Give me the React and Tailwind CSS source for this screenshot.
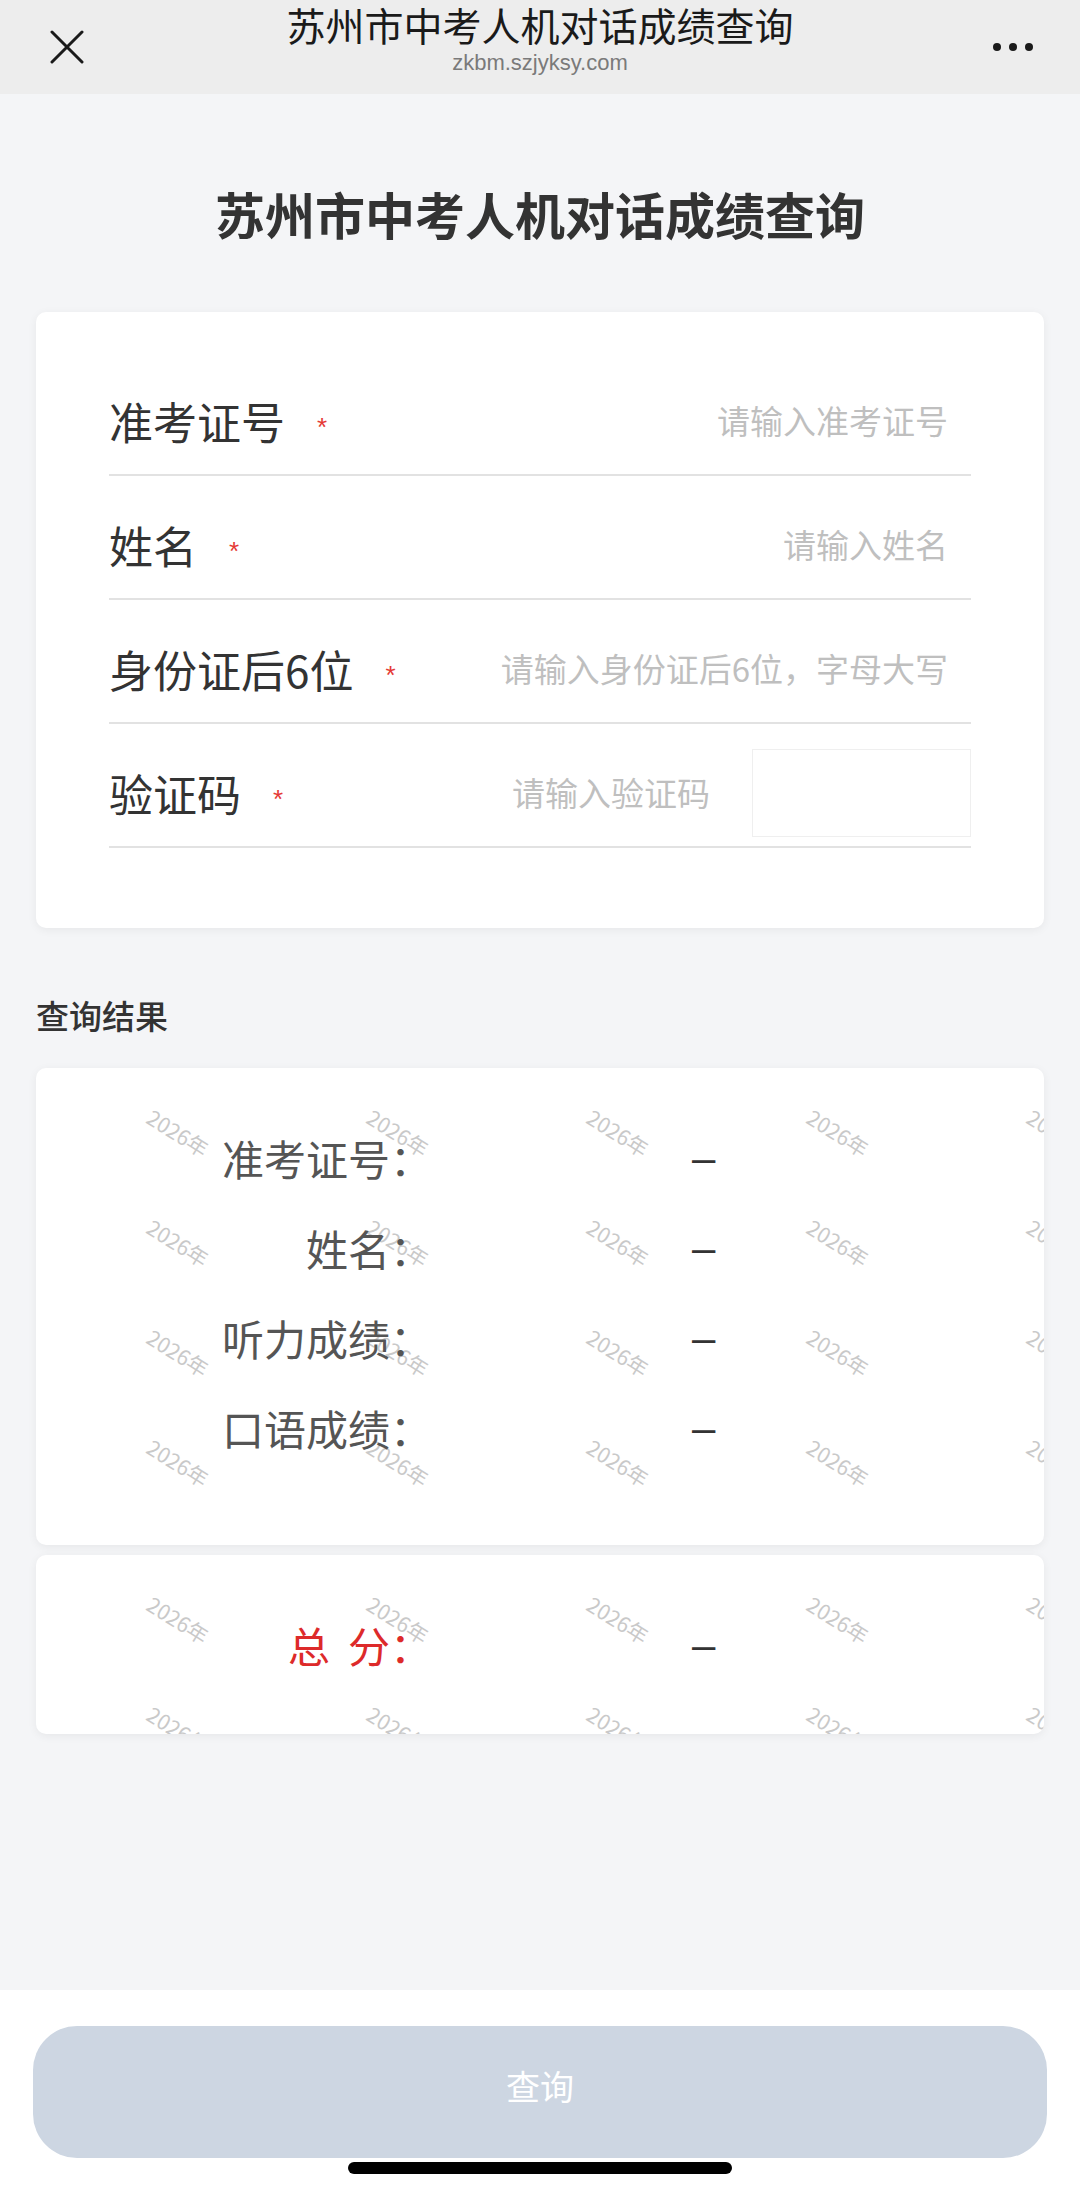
import { useState } from 'react';

const fields = [
  { name: 'examNo', label: '准考证号', placeholder: '请输入准考证号' },
  { name: 'name', label: '姓名', placeholder: '请输入姓名' },
  { name: 'idTail', label: '身份证后6位', placeholder: '请输入身份证后6位，字母大写' },
  { name: 'captcha', label: '验证码', placeholder: '请输入验证码', captcha: true },
];

const results = [
  { label: '准考证号：', value: '–' },
  { label: '姓名：', value: '–' },
  { label: '听力成绩：', value: '–' },
  { label: '口语成绩：', value: '–' },
];

// watermark grid, card-relative centres
function Watermark({ rows }) {
  const marks = [];
  for (let r = 0; r < rows; r++) {
    for (let c = 0; c < 5; c++) {
      marks.push({ key: `${r}-${c}`, left: 142 + 220 * c, top: 65 + 110 * r });
    }
  }
  return (
    <div className="pointer-events-none absolute inset-0 overflow-hidden">
      {marks.map(m => (
        <span
          key={m.key}
          className="absolute -translate-x-1/2 -translate-y-1/2 rotate-[32deg] whitespace-nowrap text-[21px] leading-none text-[#c9c9c9]"
          style={{ left: m.left, top: m.top }}
        >
          2026年
        </span>
      ))}
    </div>
  );
}

const App = () => {
  const [form, setForm] = useState({});

  return (
    <div className="flex h-[2194px] w-[1080px] flex-col bg-[#f4f5f7] font-['Noto_Sans_CJK_SC','Noto_Sans',sans-serif]">
      {/* WeChat top bar */}
      <div className="grid h-[94px] shrink-0 grid-cols-[120px_1fr_120px] bg-[#ededed]">
        <div className="flex items-center pl-[50px]">
          <svg width="34" height="34" viewBox="0 0 34 34" fill="none">
            <path d="M2 2L32 32M32 2L2 32" stroke="#1a1a1a" strokeWidth="3" strokeLinecap="round" />
          </svg>
        </div>
        <div className="flex flex-col items-center pt-[2px]">
          <div className="h-[44px] text-[39px] font-normal leading-[44px] text-[#1a1a1a]">
            苏州市中考人机对话成绩查询
          </div>
          <div className="mt-[4px] h-[26px] font-['Liberation_Sans',sans-serif] text-[22px] leading-[26px] text-[#7a7a7a]">
            zkbm.szjyksy.com
          </div>
        </div>
        <div className="flex items-center justify-end gap-[8px] pr-[47px]">
          <span className="h-[8px] w-[8px] rounded-full bg-[#1a1a1a]" />
          <span className="h-[8px] w-[8px] rounded-full bg-[#1a1a1a]" />
          <span className="h-[8px] w-[8px] rounded-full bg-[#1a1a1a]" />
        </div>
      </div>

      {/* Page body */}
      <div className="flex flex-1 flex-col px-[36px]">
        <h1 className="mt-[89px] h-[60px] text-center text-[50px] font-bold leading-[60px] text-[#333]">
          苏州市中考人机对话成绩查询
        </h1>

        {/* Query form */}
        <div className="mt-[69px] rounded-[10px] bg-white px-[73px] pb-[80px] pt-[40px] shadow-[0_2px_10px_rgba(0,0,0,0.06)]">
          {fields.map(f => (
            <div
              key={f.name}
              className="flex h-[124px] items-center border-b-[2px] border-[#e2e2e2] pt-[16px]"
            >
              <span className="shrink-0 text-[44px] leading-none text-[#333]">{f.label}</span>
              <span className="ml-[32px] shrink-0 translate-y-[6px] font-['Liberation_Sans',sans-serif] text-[26px] leading-none text-[#e53935]">
                *
              </span>
              <input
                className="min-w-0 flex-1 bg-transparent pr-[23px] text-right text-[33px] text-[#333] outline-none placeholder:text-[#bfbfbf]"
                style={f.captcha ? { paddingRight: 0 } : undefined}
                placeholder={f.placeholder}
                value={form[f.name] || ''}
                onChange={e => setForm(prev => ({ ...prev, [f.name]: e.target.value }))}
              />
              {f.captcha && (
                <div className="ml-[42px] h-[88px] w-[219px] shrink-0 border border-[#efefef] bg-white" />
              )}
            </div>
          ))}
        </div>

        <div className="mt-[67px] h-[40px] text-[33px] font-medium leading-[40px] text-[#333]">查询结果</div>

        {/* Results */}
        <div className="relative mt-[33px] overflow-hidden rounded-[10px] bg-white pb-[72px] pt-[45px] shadow-[0_2px_10px_rgba(0,0,0,0.06)]">
          <Watermark rows={4} />
          {results.map(r => (
            <div key={r.label} className="relative flex h-[90px] items-center">
              <span className="w-[396px] shrink-0 text-right text-[42px] leading-none text-[#555]">{r.label}</span>
              <span className="ml-[260px] font-['Liberation_Sans',sans-serif] text-[42px] leading-none text-[#333]">
                {r.value}
              </span>
            </div>
          ))}
        </div>

        <div className="relative mt-[10px] h-[179px] overflow-hidden rounded-[10px] bg-white pt-[45px] shadow-[0_2px_10px_rgba(0,0,0,0.06)]">
          <Watermark rows={2} />
          <div className="relative flex h-[90px] items-center">
            <span className="w-[396px] shrink-0 text-right text-[42px] leading-none text-[#dd2a2a]">
              总<span className="inline-block w-[18px]" />分：
            </span>
            <span className="ml-[260px] font-['Liberation_Sans',sans-serif] text-[42px] leading-none text-[#333]">
              –
            </span>
          </div>
        </div>
      </div>

      {/* Bottom action bar */}
      <div className="flex h-[204px] shrink-0 flex-col bg-white">
        <button className="mx-[33px] mt-[36px] flex h-[132px] items-center justify-center rounded-[44px] bg-[#cdd6e2] pb-[12px] text-[34px] leading-none text-white">
          查询
        </button>
        <div className="mx-auto mt-[4px] h-[12px] w-[384px] rounded-full bg-black" />
      </div>
    </div>
  );
};

export default App;
